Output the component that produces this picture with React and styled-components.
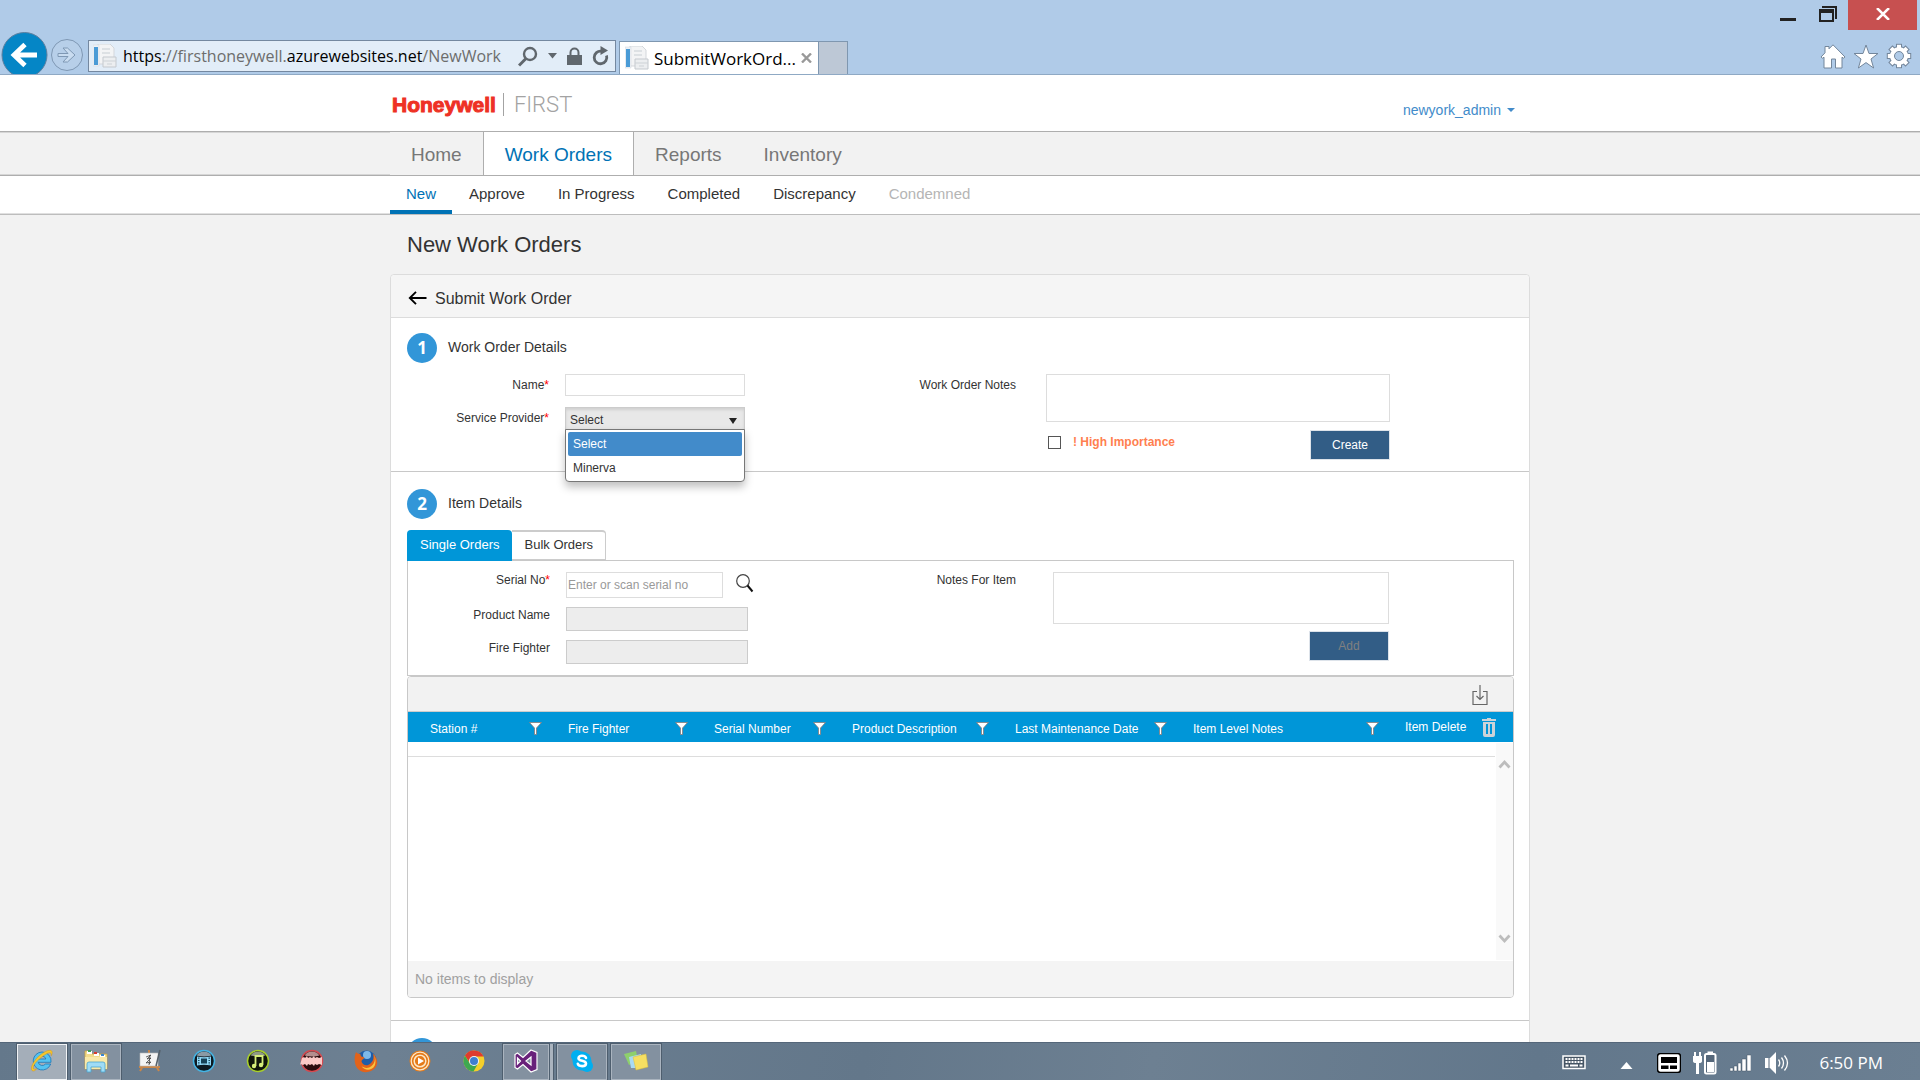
import React from "react";
import styled, { createGlobalStyle, css } from "styled-components";

const GlobalStyle = createGlobalStyle`
  *, *::before, *::after { box-sizing: border-box; }
  body {
    margin: 0;
    background: #f2f2f2;
    color: #333;
    font-family: "Liberation Sans", Arial, sans-serif;
    font-size: 12px;
  }
  button, input, select, textarea { font-family: inherit; font-size: inherit; color: inherit; margin: 0; }
  h1, h2, h3, ul { margin: 0; padding: 0; font-weight: 400; list-style: none; }
  a { color: inherit; text-decoration: none; }
`;

const Screen = styled.div`
  display: flex;
  flex-direction: column;
  height: 100vh;
  overflow: hidden;
`;

/* ---------- Browser frame ---------- */

const Chrome = styled.header`
  flex: none;
  display: flex;
  align-items: flex-end;
  justify-content: space-between;
  height: 75px;
  background: #b0cbe8;
  border-bottom: 1px solid #8fa9c4;
  font-family: "Open Sans", "Noto Sans", sans-serif;
`;

const ChromeLeft = styled.div`
  display: flex;
  align-items: flex-end;
  height: 42px;
  padding-left: 1px;
`;

const IconButton = styled.button`
  display: flex;
  align-items: center;
  justify-content: center;
  flex: none;
  padding: 0;
  border: 0;
  background: none;
`;

const BackButton = styled(IconButton)`
  height: 42px;
  width: 47px;
`;

const ForwardButton = styled(IconButton)`
  height: 34px;
  width: 34px;
  margin: 0 4px 2px 2px;
`;

const AddressBar = styled.div`
  display: flex;
  align-items: center;
  gap: 6px;
  width: 528px;
  height: 32px;
  margin: 0 3px 2px 0;
  padding: 0 6px 0 4px;
  background: #e2edf8;
  border: 1px solid #7488a0;
`;

const Url = styled.div`
  flex: 1;
  overflow: hidden;
  white-space: nowrap;
  font-size: 16px;
  line-height: 30px;
  color: #6d6d6d;
  b { font-weight: 400; color: #000; }
`;

const BarIcons = styled.div`
  display: flex;
  align-items: center;
  gap: 10px;
`;

const BrowserTab = styled.div`
  display: flex;
  align-items: center;
  gap: 5px;
  width: 200px;
  height: 33px;
  padding: 0 6px 0 5px;
  background: #fff;
  border: 1px solid #7f97b0;
  border-bottom: 0;
  font-size: 17px;
  color: #000;
  white-space: nowrap;
  span { flex: 1; }
`;

const NewTab = styled.button`
  width: 29px;
  height: 33px;
  padding: 0;
  background: #bdc8d6;
  border: 1px solid #7f97b0;
  border-width: 1px 1px 0 0;
`;

const ChromeRight = styled.div`
  display: flex;
  flex-direction: column;
  align-items: flex-end;
  justify-content: space-between;
  height: 74px;
  padding: 0 3px 5px 0;
`;

const WindowControls = styled.div`
  display: flex;
  align-items: flex-start;
  gap: 22px;
`;

const CloseButton = styled(IconButton)`
  width: 69px;
  height: 30px;
  margin-left: -11px;
  padding-bottom: 2px;
  background: #c75050;
`;

const Tools = styled.div`
  display: flex;
  gap: 7px;
  padding-right: 5px;
`;

/* ---------- Site header ---------- */

const Viewport = styled.div`
  flex: 1;
  min-height: 0;
  overflow: hidden;
`;

const Container = styled.div`
  width: 100%;
  max-width: 1140px;
  margin: 0 auto;
`;

const SiteHeader = styled.div`
  height: 57px;
  background: #fff;
  border-bottom: 1px solid #aeaeae;
`;

const HeaderInner = styled(Container)`
  display: flex;
  align-items: flex-start;
  justify-content: space-between;
  padding: 18px 15px 0 2px;
`;

const Brand = styled.div`
  display: flex;
  align-items: center;
  height: 23px;
  strong {
    padding-right: 7px;
    font-size: 21px;
    font-weight: 700;
    line-height: 21px;
    color: #ee3124;
    -webkit-text-stroke: 1px #ee3124;
  }
  span {
    padding-left: 10px;
    border-left: 1px solid #a3a3a3;
    font-family: Roboto, sans-serif;
    font-size: 22px;
    font-weight: 300;
    line-height: 23px;
    color: #a3a3a3;
  }
`;

const UserMenu = styled.button`
  display: flex;
  align-items: center;
  gap: 6px;
  padding: 0;
  margin-top: 9px;
  border: 0;
  background: none;
  color: #428bca;
  font-size: 14px;
  line-height: 16px;
  &::after {
    content: "";
    border: 4px solid transparent;
    border-top-color: #428bca;
    border-bottom: 0;
  }
`;

const MainNav = styled.nav`
  height: 44px;
  background: #f2f2f2;
  border-bottom: 1px solid #aeaeae;
  box-shadow: inset 0 1px #d6d6d6, inset 0 -1px #d6d6d6;
`;

const MainNavInner = styled(Container)`
  display: flex;
  height: 43px;
  background: #f2f2f2;
`;

const MainLink = styled.a`
  padding: 0 21px;
  font-size: 19px;
  line-height: 45px;
  color: #777;
  ${(p) =>
    p.$active &&
    css`
      background: #fff;
      color: #0072b5;
      border: solid #aeaeae;
      border-width: 0 1px;
    `}
`;

const SubNav = styled.nav`
  height: 39px;
  background: #fff;
  border-bottom: 1px solid #bdbdbd;
  box-shadow: inset 0 -1px #e0e0e0;
`;

const SubNavInner = styled(Container)`
  display: flex;
  gap: 1px;
  height: 38px;
  background: #fff;
`;

const SubLink = styled.a`
  height: 38px;
  padding: 0 16px;
  font-size: 15px;
  line-height: 36px;
  color: ${(p) => (p.$active ? "#0072b5" : p.$muted ? "#b5b5b5" : "#333")};
  border-bottom: ${(p) => (p.$active ? "4px solid #0072b5" : "0")};
`;

/* ---------- Page ---------- */

const PageTitle = styled.h1`
  padding: 15px 17px 14px;
  font-size: 22px;
  line-height: 30px;
`;

const Card = styled.main`
  background: #fff;
  border: 1px solid #dcdcdc;
  border-radius: 4px;
`;

const CardHeader = styled.div`
  display: flex;
  align-items: center;
  gap: 8px;
  height: 43px;
  padding: 4px 17px 0;
  background: #f5f5f5;
  border-bottom: 1px solid #dcdcdc;
  border-radius: 4px 4px 0 0;
  h2 { font-size: 16px; line-height: 19px; }
`;

const Section = styled.section`
  padding: ${(p) => (p.$first ? "15px" : "17px")} 15px ${(p) => (p.$first ? "11px" : "22px")} 16px;
  border-bottom: 1px solid #c8c8c8;
`;

const StepTitle = styled.h3`
  display: flex;
  align-items: flex-start;
  gap: 11px;
  margin-bottom: 11px;
  font-size: 14px;
  line-height: 28px;
`;

const StepNumber = styled.span`
  width: 30px;
  height: 30px;
  border-radius: 50%;
  background: #3296d8;
  color: #fff;
  font-family: "Open Sans", sans-serif;
  font-size: 17px;
  font-weight: 700;
  line-height: 30px;
  text-align: center;
`;

const FormRow = styled.div`
  display: flex;
  align-items: flex-start;
  justify-content: space-between;
  padding-right: 124px;
`;

const Fields = styled.div`
  display: grid;
  grid-template-columns: ${(p) => p.$labelWidth} auto;
  column-gap: ${(p) => p.$gap};
  row-gap: ${(p) => p.$rowGap};
  justify-items: start;
`;

const Label = styled.label`
  justify-self: end;
  font-size: 12px;
  line-height: ${(p) => (p.$compact ? "17px" : "22px")};
  white-space: nowrap;
  i { color: #f00; font-style: normal; }
`;

const TextInput = styled.input`
  width: ${(p) => p.$width};
  height: ${(p) => p.$height};
  padding: 0 1px;
  border: 1px solid #ddd;
  border-radius: 0;
  background: #fff;
  &::placeholder { color: #999; opacity: 1; }
  &:disabled { background: #ededed; border-color: #ccc; }
`;

const TextArea = styled.textarea`
  display: block;
  width: ${(p) => p.$width};
  height: ${(p) => p.$height};
  padding: 2px;
  border: 1px solid #ddd;
  background: #fff;
  resize: none;
`;

const SelectWrap = styled.div`
  position: relative;
  width: 180px;
  height: 22px;
  &::after {
    content: "";
    position: absolute;
    right: 8px;
    top: 11px;
    border: 4px solid transparent;
    border-top: 6px solid #222;
    border-bottom: 0;
  }
`;

const Select = styled.select`
  appearance: none;
  display: block;
  width: 100%;
  height: 23px;
  padding: 3px 4px 0;
  border: 1px solid #ccc;
  border-radius: 0;
  background: #e8e8e8;
  box-shadow: inset 0 2px 3px #d0d0d0;
`;

const OptionList = styled.ul`
  position: absolute;
  z-index: 2;
  top: 22px;
  left: 0;
  width: 100%;
  padding: 2px 2px 1px;
  background: #fff;
  border: 1px solid #777;
  border-radius: 0 0 4px 4px;
  box-shadow: 0 5px 8px rgba(0, 0, 0, 0.25);
`;

const Option = styled.li`
  height: 24px;
  padding-left: 5px;
  line-height: 24px;
  border-radius: 2px;
  background: ${(p) => (p.$selected ? "#428bca" : "#fff")};
  color: ${(p) => (p.$selected ? "#fff" : "#333")};
`;

const ActionRow = styled.div`
  grid-column: 2;
  justify-self: stretch;
  display: flex;
  align-items: flex-start;
  justify-content: ${(p) => (p.$end ? "flex-end" : "space-between")};
`;

const CheckLabel = styled.label`
  display: flex;
  align-items: center;
  gap: 12px;
  padding: 5px 0 0 2px;
  color: #ff7f50;
  font-weight: 700;
  line-height: 14px;
  input {
    appearance: none;
    width: 13px;
    height: 13px;
    border: 1px solid #555;
    background: #fff;
  }
`;

const ActionButton = styled.button`
  width: 80px;
  height: 30px;
  padding: 0;
  border: 1px solid #dde3ea;
  background: #325d86;
  color: #fff;
  font-size: 12px;
  &:disabled { color: #808080; }
`;

const Tabs = styled.div`
  display: flex;
  height: 30px;
`;

const Tab = styled.button`
  display: block;
  height: 30px;
  padding: 0 12px 2px;
  border: 1px solid #ccc;
  border-top-width: 2px;
  border-left: 0;
  border-radius: 0 4px 0 0;
  background: #fff;
  font-size: 13px;
  line-height: 24px;
  ${(p) =>
    p.$active &&
    css`
      height: 31px;
      z-index: 1;
      padding: 0 13px 2px;
      border: 0;
      border-radius: 4px 4px 0 0;
      background: #0096d8;
      color: #fff;
      line-height: 28px;
    `}
`;

const Panel = styled.div`
  padding: 11px 0;
  border: 1px solid #c8c8c8;
`;

const InputGroup = styled.div`
  display: flex;
  align-items: flex-start;
  gap: 12px;
`;

const Grid = styled.div`
  border: 1px solid #c8c8c8;
  border-radius: 4px;
  overflow: hidden;
`;

const GridToolbar = styled.div`
  display: flex;
  justify-content: flex-end;
  align-items: center;
  height: 35px;
  padding: 2px 25px 0 0;
  background: #f2f2f2;
  border-bottom: 1px solid #ccc;
`;

const Table = styled.table`
  width: 100%;
  table-layout: fixed;
  border-collapse: collapse;
  th {
    height: 30px;
    padding: 3px 4px 0 22px;
    background: #0096d8;
    color: #fff;
    font-weight: 400;
    white-space: nowrap;
  }
  th:last-child { padding: 0 17px 0 22px; }
  td { padding: 0; }
`;

const HeadCell = styled.div`
  display: flex;
  align-items: center;
  justify-content: space-between;
  line-height: 18px;
`;

const GridBody = styled.div`
  display: flex;
  gap: 1px;
  height: 219px;
`;

const Rows = styled.div`
  flex: 1;
  &::before {
    content: "";
    display: block;
    height: 15px;
    border-bottom: 1px solid #ddd;
  }
`;

const ScrollTrack = styled.div`
  display: flex;
  flex-direction: column;
  justify-content: space-between;
  width: 17px;
  margin: 1px 0;
  padding: 16px 0;
  background: #f9f9f9;
`;

const GridFooter = styled.div`
  height: 36px;
  padding-left: 7px;
  background: #f4f4f4;
  color: #a0a0a0;
  font-size: 14px;
  line-height: 36px;
`;

/* ---------- Taskbar ---------- */

const Taskbar = styled.footer`
  flex: none;
  display: flex;
  align-items: center;
  justify-content: space-between;
  height: 38px;
  padding: 1px 37px 0 17px;
  background: linear-gradient(100deg, #64788b, #6d8092 20%, #63778a 45%, #6d8092 60%, #62778b 80%, #6b7f92);
  border-top: 1px solid #55677a;
`;

const Apps = styled.div`
  display: flex;
  gap: 4px;
`;

const AppButton = styled.button`
  display: flex;
  align-items: center;
  justify-content: center;
  width: 50px;
  height: 36px;
  padding: 0 0 2px;
  border: 1px solid ${(p) => (p.$state === "active" ? "#f0f3f6" : p.$state ? "#aab4bf" : "transparent")};
  background: ${(p) => (p.$state === "active" ? "#a4aeb9" : p.$state ? "#8391a0" : "none")};
  box-shadow: ${(p) => (p.$state ? "0 0 0 1px #4e5e6e" : "none")};
  ${(p) =>
    p.$stacked &&
    css`
      width: 46px;
      margin-right: 4px;
      box-shadow: 0 0 0 1px #4e5e6e, 4px 0 0 #aab4bf, 5px 0 0 #4e5e6e;
    `}
`;

const Tray = styled.div`
  display: flex;
  align-items: center;
  padding-top: 2px;
  color: #fff;
`;

const TrayIcon = styled.span`
  display: flex;
  margin-right: ${(p) => p.$gap};
`;

const Clock = styled.time`
  font-family: "Open Sans", "Noto Sans", sans-serif;
  font-size: 17px;
  line-height: 24px;
`;

/* ---------- Icons ---------- */

const Favicon = () => (
  <svg width="24" height="24" viewBox="0 0 24 24" style={{ flex: "none" }} aria-hidden="true">
    <path d="M5 0h12l4 4v16H5z" fill="#f3f4f5" stroke="#d3d7db" />
    <path d="M0 1h6v21H0z" fill="#eef2f6" stroke="#d0d7de" strokeWidth=".5" />
    <path d="M1 3h4v18H1z" fill="#4a9bd6" />
    <path d="M9 5h8M9 9h8" stroke="#dde1e4" strokeWidth="2" />
    <path d="M10 13h13v10H10z" fill="#eceef0" stroke="#c4c9ce" />
    <path d="M10 17h13M14 20h5" stroke="#cdd2d6" />
  </svg>
);

const Filter = () => (
  <svg width="13" height="13" viewBox="0 0 13 13" aria-hidden="true">
    <path d="M.5.5h12L7.500 6v6.500h-2V6z" fill="#fff" stroke="#8a7b78" strokeWidth=".8" />
  </svg>
);

const Chevron = ({ down }) => (
  <svg width="17" height="10" viewBox="0 0 17 10" aria-hidden="true">
    <path d={down ? "M3.500 1.500 8.500 7l5-5.500" : "M3.500 8.500 8.500 3l5 5.500"} fill="none" stroke="#bdbdbd" strokeWidth="2.800" />
  </svg>
);

const icons = {
  ie: (
    <svg width="24" height="24" viewBox="0 0 24 24">
      <path d="M12 3a9 9 0 1 0 8.700 12h-5.200a4.200 4.200 0 0 1-7.300-1.700H21A9 9 0 0 0 12 3zM8.200 10a4 4 0 0 1 7.700 0z" fill="#55c3f0" stroke="#1a76b8" strokeWidth=".8" />
      <path d="M3.500 22C-1 22 2 13 9 7 15 1.500 21 0 22 2.500c.5 1.300 0 3-.8 4.300.2-2-.3-3-1.800-3C16 3.800 3 14 3.200 19c0 1.500 1.600 1.700 3.600.6-1 1.300-2.200 2.400-3.300 2.400z" fill="#f7c52c" stroke="#c98d10" strokeWidth=".4" />
    </svg>
  ),
  explorer: (
    <svg width="26" height="26" viewBox="0 0 26 26">
      <path d="M2 3h6l1 3h15v15H2z" fill="#f2dc8c" stroke="#c7a548" strokeWidth=".8" />
      <path d="M4 3h5v3H4zM11 5h5v3h-5zM17 7h5v3h-5z" fill="#fff" />
      <path d="M5 2h3v2H5z" fill="#3ea55a" /><path d="M11 4h3v2h-3z" fill="#d8392b" /><path d="M18 6h3v2h-3z" fill="#3a87d0" />
      <path d="M2 9h22v12H2z" fill="#f8e9a9" />
      <path d="M4 24v-8q0-2 2-2h14q2 0 2 2v8h-4v-5H8v5z" fill="#9fdcf5" stroke="#4aa5cf" strokeWidth=".8" />
    </svg>
  ),
  easel: (
    <svg width="24" height="24" viewBox="0 0 24 24">
      <path d="m5 17-3 5M18 17l3 5M11 1v3M1 18h21" stroke="#c98648" strokeWidth="2" />
      <path d="M2 4h18v13H2z" fill="#f4f4f4" stroke="#b8b8b8" strokeWidth=".6" />
      <path d="m8 8 5-2-4 4 4-1-5 5 5-1-2 2M12 6l-1 10" fill="none" stroke="#444" strokeWidth=".8" />
      <path d="m22 1-4 16" stroke="#55606a" strokeWidth="1.500" />
    </svg>
  ),
  film: (
    <svg width="24" height="24" viewBox="0 0 24 24">
      <circle cx="12" cy="12" r="10.500" fill="#0d1a22" stroke="#45b4e4" strokeWidth="1.500" />
      <path d="M4.500 6.500a9 9 0 0 1 15 0q-7 2-15 0z" fill="#8a9aa4" />
      <path d="M5 7.500q7 1.500 14 0v9q-7-1.500-14 0z" fill="#8fd8f6" />
      <path d="M9 9.500h6v5H9z" fill="#164257" />
      <path d="M6.800 8.500v8M17.200 8.500v8" stroke="#164257" strokeWidth="1.400" strokeDasharray="1.200 1.200" />
    </svg>
  ),
  music: (
    <svg width="24" height="24" viewBox="0 0 24 24">
      <circle cx="12" cy="12" r="10.500" fill="#10160a" stroke="#a8cf2c" strokeWidth="1.500" />
      <path d="M4.500 6.500a9 9 0 0 1 15 0q-7 2-15 0z" fill="#8f9a86" />
      <path d="M9.500 17V7h7v9" fill="none" stroke="#d6ee7a" strokeWidth="1.800" />
      <circle cx="8" cy="17" r="2.200" fill="#d6ee7a" /><circle cx="15" cy="16" r="2.200" fill="#d6ee7a" />
    </svg>
  ),
  wave: (
    <svg width="24" height="24" viewBox="0 0 24 24">
      <circle cx="12" cy="12" r="10.500" fill="#2b0b0d" stroke="#d64a50" strokeWidth="1.500" />
      <path d="M4.500 6.500a9 9 0 0 1 15 0q-7 2-15 0z" fill="#b58e8e" />
      <path d="M2 9l2-1 1 1 2-2 1 2 2-1 2 1 2-2 1 2 2-1 2 1 3-1v8l-3-1-2 1-2-1-1 2-2-2-2 1-2-1-1 2-2-2-2 1-2-1-1 1z" fill="#fbc9c6" />
    </svg>
  ),
  firefox: (
    <svg width="24" height="24" viewBox="0 0 24 24">
      <circle cx="12.500" cy="11.500" r="10" fill="#1f5da8" /><circle cx="13" cy="6" r="4" fill="#7db9ea" />
      <path d="M2 3c1.500 1.500 2 1.800 4.500 1.800C6 7 7.500 8 10.500 8.500c-1 2-3 2-3 4 1 4 6 5 9 2 3-3 3.500-6 2.500-10 4.500 4 5.500 10 2.500 14-4.500 6-14 6-18 1C0 15 0 8 2 3z" fill="#e2631a" />
      <path d="M18.500 4c3.500 4 3 10-1 13-3 3-8 2-10 0 3 5 10 5 13 0 2-4 1-10-2-13z" fill="#f9c440" />
    </svg>
  ),
  player: (
    <svg width="24" height="24" viewBox="0 0 24 24">
      <circle cx="12" cy="12" r="10.500" fill="#e57a18" />
      <circle cx="12" cy="12" r="8.800" fill="none" stroke="#fde7c8" strokeWidth="1.300" />
      <circle cx="12" cy="12" r="5.800" fill="none" stroke="#fde7c8" strokeWidth="1.500" />
      <path d="m10 8.500 6 3.500-6 3.500z" fill="#fff" />
    </svg>
  ),
  chrome: (
    <svg width="24" height="24" viewBox="0 0 24 24">
      <circle cx="12" cy="12" r="10.500" fill="#f5cf2b" />
      <path d="M2.900 6.800A10.500 10.500 0 0 1 21.500 7.500H12L8 14z" fill="#df3b2e" />
      <path d="M2.900 6.800A10.500 10.500 0 0 0 11.500 22.500L16 14.500l-8 0z" fill="#3ea850" />
      <circle cx="12" cy="12" r="5" fill="#f2f4f5" /><circle cx="12" cy="12" r="4" fill="#3e7fd0" />
    </svg>
  ),
  studio: (
    <svg width="24" height="24" viewBox="0 0 24 24">
      <path d="m17 1 6 2.500v17L17 23 9 15.500 3.500 20 1 18.500v-13L3.500 4 9 8.500zM17 8l-5 4 5 4zM3.500 9v6L6.500 12z" fill="#68217a" stroke="#fff" strokeWidth="1.200" fillRule="evenodd" />
    </svg>
  ),
  skype: (
    <svg width="24" height="24" viewBox="0 0 24 24">
      <circle cx="12" cy="12" r="9.500" fill="#00aff0" /><circle cx="7" cy="7" r="6" fill="#00aff0" /><circle cx="17" cy="17" r="6" fill="#00aff0" />
      <path d="M16 9c-.5-2.500-7.500-3.500-7.500.2 0 3.300 7.500 2 7.500 5.300 0 3.500-7.500 3.300-8.200.3" fill="none" stroke="#fff" strokeWidth="2.600" strokeLinecap="round" />
    </svg>
  ),
  notes: (
    <svg width="26" height="24" viewBox="0 0 26 24">
      <path d="m1 5 12-3 2 10-9 4z" fill="#8ed06c" /><path d="m6 8 12-3v14H8z" fill="#a8daf4" />
      <path d="m10 8 13-3 2 13-12 3z" fill="#f6df62" stroke="#dbbf3c" strokeWidth=".5" />
    </svg>
  ),
};

const apps = [
  { name: "Internet Explorer", icon: "ie", state: "active" },
  { name: "File Explorer", icon: "explorer", state: "open" },
  { name: "Whiteboard", icon: "easel" },
  { name: "Video", icon: "film" },
  { name: "Music", icon: "music" },
  { name: "Audio editor", icon: "wave" },
  { name: "Firefox", icon: "firefox" },
  { name: "Media player", icon: "player" },
  { name: "Chrome", icon: "chrome" },
  { name: "Visual Studio", icon: "studio", state: "open", stacked: true },
  { name: "Skype", icon: "skype", state: "open" },
  { name: "Sticky Notes", icon: "notes", state: "open" },
];

const columns = [
  { title: "Station #", width: 138 },
  { title: "Fire Fighter", width: 146 },
  { title: "Serial Number", width: 138 },
  { title: "Product Description", width: 163 },
  { title: "Last Maintenance Date", width: 178 },
  { title: "Item Level Notes", width: 212 },
];

function BrowserFrame() {
  return (
    <Chrome>
      <ChromeLeft>
        <BackButton aria-label="Back">
          <svg width="47" height="42" viewBox="0 0 47 42">
            <circle cx="23.500" cy="23" r="22.500" fill="#0586c6" stroke="#5b7f9f" />
            <path d="M36 23H13M24 12.500 13 23 24 33.500" fill="none" stroke="#fff" strokeWidth="4.800" />
          </svg>
        </BackButton>
        <ForwardButton aria-label="Forward">
          <svg width="34" height="34" viewBox="0 0 34 34">
            <circle cx="17" cy="17" r="15.500" fill="#b7cfe9" stroke="#7f98b4" />
            <path d="M8 15.500h10l-5-5.500h4.500l7.500 7-7.500 7H13l5-5.500H8z" fill="#c9dcf0" stroke="#7f98b4" />
          </svg>
        </ForwardButton>
        <AddressBar>
          <Favicon />
          <Url><b>https</b>://firsthoneywell.<b>azurewebsites.net</b>/NewWork</Url>
          <BarIcons>
            <svg width="20" height="21" viewBox="0 0 20 21"><circle cx="12" cy="8" r="6" fill="none" stroke="#60676d" strokeWidth="2.400" /><path d="m8 12.500-7 7" stroke="#60676d" strokeWidth="3" /></svg>
            <svg width="9" height="6" viewBox="0 0 9 6"><path d="M0 0h9L4.500 5.500z" fill="#60676d" /></svg>
            <svg width="15" height="19" viewBox="0 0 15 19"><path d="M3.500 9V5.500a4 4 0 0 1 8 0V9" fill="none" stroke="#60676d" strokeWidth="2" /><path d="M0 8h15v10H0z" fill="#60676d" /></svg>
            <svg width="17" height="20" viewBox="0 0 17 20"><path d="M14.500 9.500a6.300 6.300 0 1 1-5-4.300" fill="none" stroke="#60676d" strokeWidth="2.800" /><path d="M8.500 0v9l7.500-4.500z" fill="#60676d" /></svg>
          </BarIcons>
        </AddressBar>
        <BrowserTab>
          <Favicon />
          <span>SubmitWorkOrd...</span>
          <svg width="11" height="10" viewBox="0 0 11 10"><path d="m1 .5 9 9m0-9-9 9" stroke="#999" strokeWidth="2.400" /></svg>
        </BrowserTab>
        <NewTab aria-label="New tab" />
      </ChromeLeft>
      <ChromeRight>
        <WindowControls>
          <IconButton aria-label="Minimize"><svg width="17" height="24" viewBox="0 0 17 24"><path d="M1 18h16v3H1z" fill="#222" /></svg></IconButton>
          <IconButton aria-label="Restore">
            <svg width="19" height="24" viewBox="0 0 19 24"><path d="M4 6h15v13h-2V8H4zM1 9h15v13H1zM3 13v7h11v-7z" fill="#222" fillRule="evenodd" /></svg>
          </IconButton>
          <CloseButton aria-label="Close"><svg width="14" height="12" viewBox="0 0 14 12"><path d="m1 0 12 12M13 0 1 12" stroke="#fff" strokeWidth="2.500" /></svg></CloseButton>
        </WindowControls>
        <Tools>
          <IconButton aria-label="Home page"><svg width="26" height="25" viewBox="0 0 26 25"><path d="M13 .8 25 13l-1.500 1.200-1.500-1V24h-6.500v-9h-4v9H4V13.200l-1.500 1L1 13l4-4.200V2.500h4v2.300z" fill="#fff" stroke="#73869b" /></svg></IconButton>
          <IconButton aria-label="Favorites"><svg width="26" height="25" viewBox="0 0 26 25"><path d="m13 1 3 8.500h9L18 15l2.600 9L13 18.600 5.400 24 8 15 1 9.500h9z" fill="#fff" stroke="#73869b" /></svg></IconButton>
          <IconButton aria-label="Settings">
            <svg width="26" height="26" viewBox="0 0 26 26">
              {[["#73869b", 6], ["#fff", 4]].map(([stroke, w]) => (
                <g key={stroke} stroke={stroke} fill="none">
                  {[0, 45, 90, 135].map((a) => (
                    <path key={a} d={w === 6 ? "M13 .8v24.400" : "M13 1.800v22.400"} strokeWidth={w} transform={`rotate(${a} 13 13)`} />
                  ))}
                  <circle cx="13" cy="13" r="7" strokeWidth={w} />
                </g>
              ))}
              <circle cx="13" cy="13" r="4.500" fill="#b0cbe8" stroke="#73869b" />
            </svg>
          </IconButton>
        </Tools>
      </ChromeRight>
    </Chrome>
  );
}

function WorkOrderDetails() {
  return (
    <Section $first>
      <StepTitle><StepNumber>1</StepNumber>Work Order Details</StepTitle>
      <FormRow>
        <Fields $labelWidth="142px" $gap="16px" $rowGap="11px">
          <Label htmlFor="name">Name<i>*</i></Label>
          <TextInput id="name" $width="180px" $height="22px" />
          <Label htmlFor="provider">Service Provider<i>*</i></Label>
          <SelectWrap>
            <Select id="provider" defaultValue="Select">
              <option>Select</option>
              <option>Minerva</option>
            </Select>
            <OptionList role="listbox" aria-label="Service Provider">
              <Option role="option" aria-selected="true" $selected>Select</Option>
              <Option role="option" aria-selected="false">Minerva</Option>
            </OptionList>
          </SelectWrap>
        </Fields>
        <Fields $labelWidth="auto" $gap="30px" $rowGap="8px">
          <Label htmlFor="order-notes">Work Order Notes</Label>
          <TextArea id="order-notes" $width="344px" $height="48px" />
          <ActionRow>
            <CheckLabel><input type="checkbox" />! High Importance</CheckLabel>
            <ActionButton>Create</ActionButton>
          </ActionRow>
        </Fields>
      </FormRow>
    </Section>
  );
}

function ItemDetails() {
  return (
    <Section>
      <StepTitle><StepNumber>2</StepNumber>Item Details</StepTitle>
      <Tabs role="tablist">
        <Tab role="tab" aria-selected="true" $active>Single Orders</Tab>
        <Tab role="tab" aria-selected="false">Bulk Orders</Tab>
      </Tabs>
      <Panel role="tabpanel">
        <FormRow>
          <Fields $labelWidth="142px" $gap="16px" $rowGap="9px">
            <Label $compact htmlFor="serial">Serial No<i>*</i></Label>
            <InputGroup>
              <TextInput id="serial" placeholder="Enter or scan serial no" $width="157px" $height="26px" />
              <IconButton aria-label="Search">
                <svg width="19" height="21" viewBox="0 0 19 21"><circle cx="8" cy="9" r="6.300" fill="none" stroke="#444" strokeWidth="1.200" /><path d="m12.500 13.500 5 6" stroke="#111" strokeWidth="2" /></svg>
              </IconButton>
            </InputGroup>
            <Label $compact htmlFor="product">Product Name</Label>
            <TextInput id="product" disabled $width="182px" $height="24px" />
            <Label $compact htmlFor="fighter">Fire Fighter</Label>
            <TextInput id="fighter" disabled $width="182px" $height="24px" />
          </Fields>
          <Fields $labelWidth="auto" $gap="37px" $rowGap="7px">
            <Label $compact htmlFor="item-notes">Notes For Item</Label>
            <TextArea id="item-notes" $width="336px" $height="52px" />
            <ActionRow $end><ActionButton disabled>Add</ActionButton></ActionRow>
          </Fields>
        </FormRow>
      </Panel>
      <Grid>
        <GridToolbar>
          <IconButton aria-label="Export">
            <svg width="16" height="21" viewBox="0 0 16 21"><path d="M5 6.500H1v13h14v-13h-4M8 0v14M4.500 11 8 14.500 11.500 11" fill="none" stroke="#666" strokeWidth="1.200" /></svg>
          </IconButton>
        </GridToolbar>
        <Table>
          <colgroup>
            {columns.map((c) => <col key={c.title} width={c.width} />)}
            <col />
          </colgroup>
          <thead>
            <tr>
              {columns.map((c) => (
                <th key={c.title} scope="col"><HeadCell>{c.title}<Filter /></HeadCell></th>
              ))}
              <th scope="col">
                <HeadCell>
                  Item Delete
                  <svg width="14" height="19" viewBox="0 0 14 19"><path d="M5 0h4v1h5v2H0V1h5zM1 4h12v13q0 2-2 2H3q-2 0-2-2zM4 6v10h2V6zM8 6v10h2V6z" fill="#ccd3d8" fillRule="evenodd" /></svg>
                </HeadCell>
              </th>
            </tr>
          </thead>
          <tbody>
            <tr>
              <td colSpan={7}>
                <GridBody><Rows /><ScrollTrack><Chevron /><Chevron down /></ScrollTrack></GridBody>
              </td>
            </tr>
          </tbody>
        </Table>
        <GridFooter>No items to display</GridFooter>
      </Grid>
    </Section>
  );
}

function TaskbarView() {
  return (
    <Taskbar>
      <Apps>
        {apps.map((a) => (
          <AppButton key={a.name} aria-label={a.name} $state={a.state} $stacked={a.stacked}>{icons[a.icon]}</AppButton>
        ))}
      </Apps>
      <Tray>
        <TrayIcon $gap="34px">
          <svg width="24" height="17" viewBox="0 0 24 17"><path d="M1 1h22v12.500H1z" fill="#445464" stroke="#fff" strokeWidth="1.500" /><path d="M3.500 4h17M3.500 7h17" stroke="#fff" strokeWidth="1.800" strokeDasharray="2 1" /><path d="M3.500 10.500h3m1.500 0h8m1.500 0h3" stroke="#fff" strokeWidth="1.800" /></svg>
        </TrayIcon>
        <TrayIcon $gap="24px">
          <svg width="13" height="14" viewBox="0 0 13 14"><path d="M6.500 6 12.500 13H.5z" fill="#fff" /></svg>
        </TrayIcon>
        <TrayIcon $gap="12px">
          <svg width="24" height="20" viewBox="0 0 24 20"><rect x=".5" y=".5" width="23" height="19" rx="3" fill="#fff" stroke="#000" strokeWidth="1.500" /><path d="M4 4h16v6H4zM4 12.500h7.500V16H4zM13 12.500h7V16h-7z" /></svg>
        </TrayIcon>
        <TrayIcon $gap="13px">
          <svg width="24" height="24" viewBox="0 0 24 24"><path d="M2 1v4M7 1v4" stroke="#fff" strokeWidth="2" /><path d="M0 5h9v5q0 2-3 2v11H3V12q-3 0-3-2z" fill="#fff" /><rect x="12" y="3" width="10.500" height="19.500" rx="1.500" fill="#55677a" stroke="#fff" strokeWidth="2" /><path d="M14.500.500h5.500v2h-5.500zM14 11h7v10h-7z" fill="#fff" /></svg>
        </TrayIcon>
        <TrayIcon $gap="14px">
          <svg width="21" height="18" viewBox="0 0 21 18"><path d="M0 14h3v3H0zM4 12h3v5H4zM8 9h3v8H8zM12 5h4v12h-4zM17 1h4v16h-4z" fill="#fff" stroke="#445464" strokeWidth=".5" /></svg>
        </TrayIcon>
        <TrayIcon $gap="30px">
          <svg width="24" height="24" viewBox="0 0 24 24"><path d="M0 7h5l6-6v22l-6-6H0z" fill="#fff" /><path d="M4 7v10" stroke="#55677a" /><path d="M13.500 8.500q2.500 3.500 0 7M16.500 6.500q4 5.500 0 11M19.500 4.500q6 7.500 0 15" fill="none" stroke="#fff" strokeWidth="1.300" /></svg>
        </TrayIcon>
        <Clock>6:50 PM</Clock>
      </Tray>
    </Taskbar>
  );
}

export default function App() {
  return (
    <Screen>
      <GlobalStyle />
      <BrowserFrame />
      <Viewport>
        <SiteHeader>
          <HeaderInner>
            <Brand><strong>Honeywell</strong><span>FIRST</span></Brand>
            <UserMenu>newyork_admin</UserMenu>
          </HeaderInner>
        </SiteHeader>
        <MainNav>
          <MainNavInner>
            <MainLink href="#home">Home</MainLink>
            <MainLink href="#orders" $active>Work Orders</MainLink>
            <MainLink href="#reports">Reports</MainLink>
            <MainLink href="#inventory">Inventory</MainLink>
          </MainNavInner>
        </MainNav>
        <SubNav>
          <SubNavInner>
            <SubLink href="#new" $active>New</SubLink>
            <SubLink href="#approve">Approve</SubLink>
            <SubLink href="#progress">In Progress</SubLink>
            <SubLink href="#completed">Completed</SubLink>
            <SubLink href="#discrepancy">Discrepancy</SubLink>
            <SubLink href="#condemned" $muted>Condemned</SubLink>
          </SubNavInner>
        </SubNav>
        <Container>
          <PageTitle>New Work Orders</PageTitle>
          <Card>
            <CardHeader>
              <IconButton aria-label="Back to work orders">
                <svg width="19" height="14" viewBox="0 0 19 14"><path d="M18.500 7H2M8 .8 1.800 7 8 13.200" fill="none" stroke="#000" strokeWidth="1.900" /></svg>
              </IconButton>
              <h2>Submit Work Order</h2>
            </CardHeader>
            <WorkOrderDetails />
            <ItemDetails />
            <Section>
              <StepTitle><StepNumber /></StepTitle>
            </Section>
          </Card>
        </Container>
      </Viewport>
      <TaskbarView />
    </Screen>
  );
}
